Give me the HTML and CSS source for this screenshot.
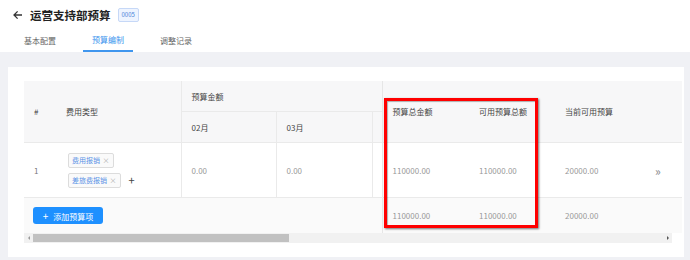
FILE: index.html
```html
<!DOCTYPE html>
<html lang="zh">

<head>
    <meta charset="UTF-8">
    <meta name="viewport" content="width=device-width, initial-scale=1.0">
    <title>运营支持部预算</title>
    <link rel="stylesheet" href="styles.css">
</head>

<body>

    <div class="page-head">
        <div class="title-row">
            <svg class="back" width="10" height="10" viewBox="0 0 10 10">
                <path d="M9 5H1.2M4.6 1.4L1 5l3.6 3.6" fill="none" stroke="#333" stroke-width="1.3" />
            </svg>
            <h1>运营支持部预算</h1>
            <span class="code">0005</span>
        </div>
        <div class="tabs">
            <span class="tab">基本配置</span>
            <span class="tab active">预算编制</span>
            <span class="tab">调整记录</span>
        </div>
    </div>

    <div class="main">
        <div class="card">
            <table class="budget">
                <colgroup>
                    <col style="width:32px">
                    <col style="width:125px">
                    <col style="width:95px">
                    <col style="width:96px">
                    <col style="width:10px">
                    <col style="width:87px">
                    <col style="width:86px">
                    <col style="width:86px">
                    <col style="width:41px">
                </colgroup>
                <thead>
                    <tr class="head-1">
                        <th rowspan="2">#</th>
                        <th rowspan="2">费用类型</th>
                        <th colspan="3" class="line-l">预算金额</th>
                        <th rowspan="2" class="fixed">预算总金额</th>
                        <th rowspan="2">可用预算总额</th>
                        <th rowspan="2">当前可用预算</th>
                        <th rowspan="2"></th>
                    </tr>
                    <tr class="head-2">
                        <th class="line-l">02月</th>
                        <th class="line-l">03月</th>
                        <th class="line-l cut"><span class="sliver"></span></th>
                    </tr>
                </thead>
                <tbody>
                    <tr class="row">
                        <td>1</td>
                        <td>
                            <div class="tags">
                                <span class="tag">费用报销 <i>×</i></span>
                                <span class="tag-line">
                                    <span class="tag">差旅费报销 <i>×</i></span>
                                    <span class="add">+</span>
                                </span>
                            </div>
                        </td>
                        <td class="line-l">0.00</td>
                        <td class="line-l">0.00</td>
                        <td class="line-l cut"><span class="sliver"></span></td>
                        <td class="fixed">110000.00</td>
                        <td>110000.00</td>
                        <td>20000.00</td>
                        <td class="more">»</td>
                    </tr>
                    <tr class="sum">
                        <td colspan="5">
                            <button class="add-btn"><b>+</b> 添加预算项</button>
                        </td>
                        <td class="fixed">110000.00</td>
                        <td>110000.00</td>
                        <td>20000.00</td>
                        <td></td>
                    </tr>
                </tbody>
            </table>
            <div class="scrollbar">
                <span class="arrow-l"></span>
                <span class="thumb"></span>
                <span class="arrow-r"></span>
            </div>
        </div>
    </div>

    <!-- 标注框 -->
    <div class="mark"></div>

</body>

</html>
```

FILE: styles.css
```css
body {
    margin: 0;
    font-family: "Noto Sans CJK SC", "Noto Sans", sans-serif;
    color: #333;
    background-color: #fff;
    width: 690px;
    height: 260px;
    overflow: hidden;
    position: relative;
}

.page-head {
    height: 52px;
}

.title-row {
    height: 30px;
    display: flex;
    align-items: center;
    padding-left: 13px;
}

.back {
    margin-right: 7px;
}

h1 {
    margin: 0;
    font-size: 11.5px;
    font-weight: bold;
    color: #222;
}

.code {
    margin-left: 7px;
    height: 12px;
    padding: 0 3px;
    line-height: 12px;
    font-size: 6px;
    color: #4a7fd8;
    background-color: #eef4ff;
    border: 1px solid #c6d8f7;
    border-radius: 2px;
}

.tabs {
    display: flex;
    gap: 18px;
    padding-left: 15px;
    height: 22px;
}

.tab {
    width: 50px;
    text-align: center;
    font-size: 8px;
    line-height: 22px;
    color: #666;
    box-sizing: border-box;
}

.tab.active {
    color: #4096ee;
    border-bottom: 2px solid #4096ee;
    line-height: 20px;
}

.main {
    background-color: #f0f1f5;
    height: 208px;
    padding: 15px 6px 0 8px;
    box-sizing: border-box;
}

.card {
    background-color: #fff;
    width: 676px;
    height: 190px;
    padding: 14px 12px 0 16px;
    box-sizing: border-box;
}

.budget {
    width: 648px;
    table-layout: fixed;
    border-collapse: collapse;
    font-size: 8px;
}

.budget th {
    background-color: #f7f7f8;
    font-weight: normal;
    color: #444;
    text-align: left;
    padding: 0 0 0 10px;
    white-space: nowrap;
    overflow: hidden;
}

.budget td {
    padding: 0 0 0 10px;
    color: #999;
    white-space: nowrap;
    overflow: hidden;
}

.head-1 th {
    height: 30px;
}

.head-2 th {
    height: 30px;
    border-top: 1px solid #eaeaea;
}

.budget .line-l {
    border-left: 1px solid #eaeaea;
}

.budget .cut {
    padding: 0;
}

.sliver {
    display: block;
    margin-left: 9px;
    width: 1px;
    height: 5px;
    background-color: #c9b9a8;
}

.budget .fixed {
    border-left: 1px solid #e6e6e6;
    box-shadow: -3px 0 4px rgba(0, 0, 0, 0.06);
}

.row td {
    height: 54px;
    border-top: 1px solid #eaeaea;
    border-bottom: 1px solid #eaeaea;
}

.row td:first-child {
    color: #777;
}

.tags {
    display: flex;
    flex-direction: column;
    gap: 5px;
    align-items: flex-start;
    margin-left: 2px;
}

.tag-line {
    display: flex;
    align-items: center;
    gap: 8px;
}

.tag {
    display: inline-block;
    height: 13px;
    line-height: 13px;
    padding: 0 3px;
    font-size: 7px;
    color: #5b93e6;
    background-color: #fafafa;
    border: 1px solid #dcdcdc;
    border-radius: 2px;
}

.tag i {
    font-style: normal;
    color: #aaa;
    margin-left: 1px;
}

.add {
    font-size: 11px;
    color: #444;
    line-height: 13px;
}

.budget .more {
    color: #888;
    font-size: 12px;
    padding-left: 14px;
}

.sum td {
    height: 35px;
    background-color: #fafafa;
}

.add-btn {
    height: 17px;
    width: 70px;
    margin-left: -1px;
    background-color: #1e90ff;
    color: #fff;
    border: none;
    border-radius: 3px;
    font-family: inherit;
    font-size: 8px;
    padding: 0;
    cursor: pointer;
}

.add-btn b {
    font-weight: normal;
    font-size: 10px;
    margin-right: 3px;
}

.scrollbar {
    width: 648px;
    height: 10px;
    background-color: #f1f1f1;
    display: flex;
    align-items: center;
}

.arrow-l,
.arrow-r {
    width: 9px;
    display: flex;
    justify-content: center;
}

.arrow-l::before {
    content: "";
    border: 2px solid transparent;
    border-right: 2px solid #999;
    border-left: 0;
}

.arrow-r {
    margin-left: auto;
}

.arrow-r::before {
    content: "";
    border: 2px solid transparent;
    border-left: 2px solid #555;
    border-right: 0;
}

.thumb {
    width: 256px;
    height: 8px;
    background-color: #c1c1c1;
}

.mark {
    position: absolute;
    left: 384px;
    top: 98px;
    width: 148px;
    height: 124px;
    border: 3px solid #f00;
    box-shadow: 1px 1px 2px rgba(0, 0, 0, 0.55), inset 1px 1px 1px rgba(0, 0, 0, 0.3);
}
```
